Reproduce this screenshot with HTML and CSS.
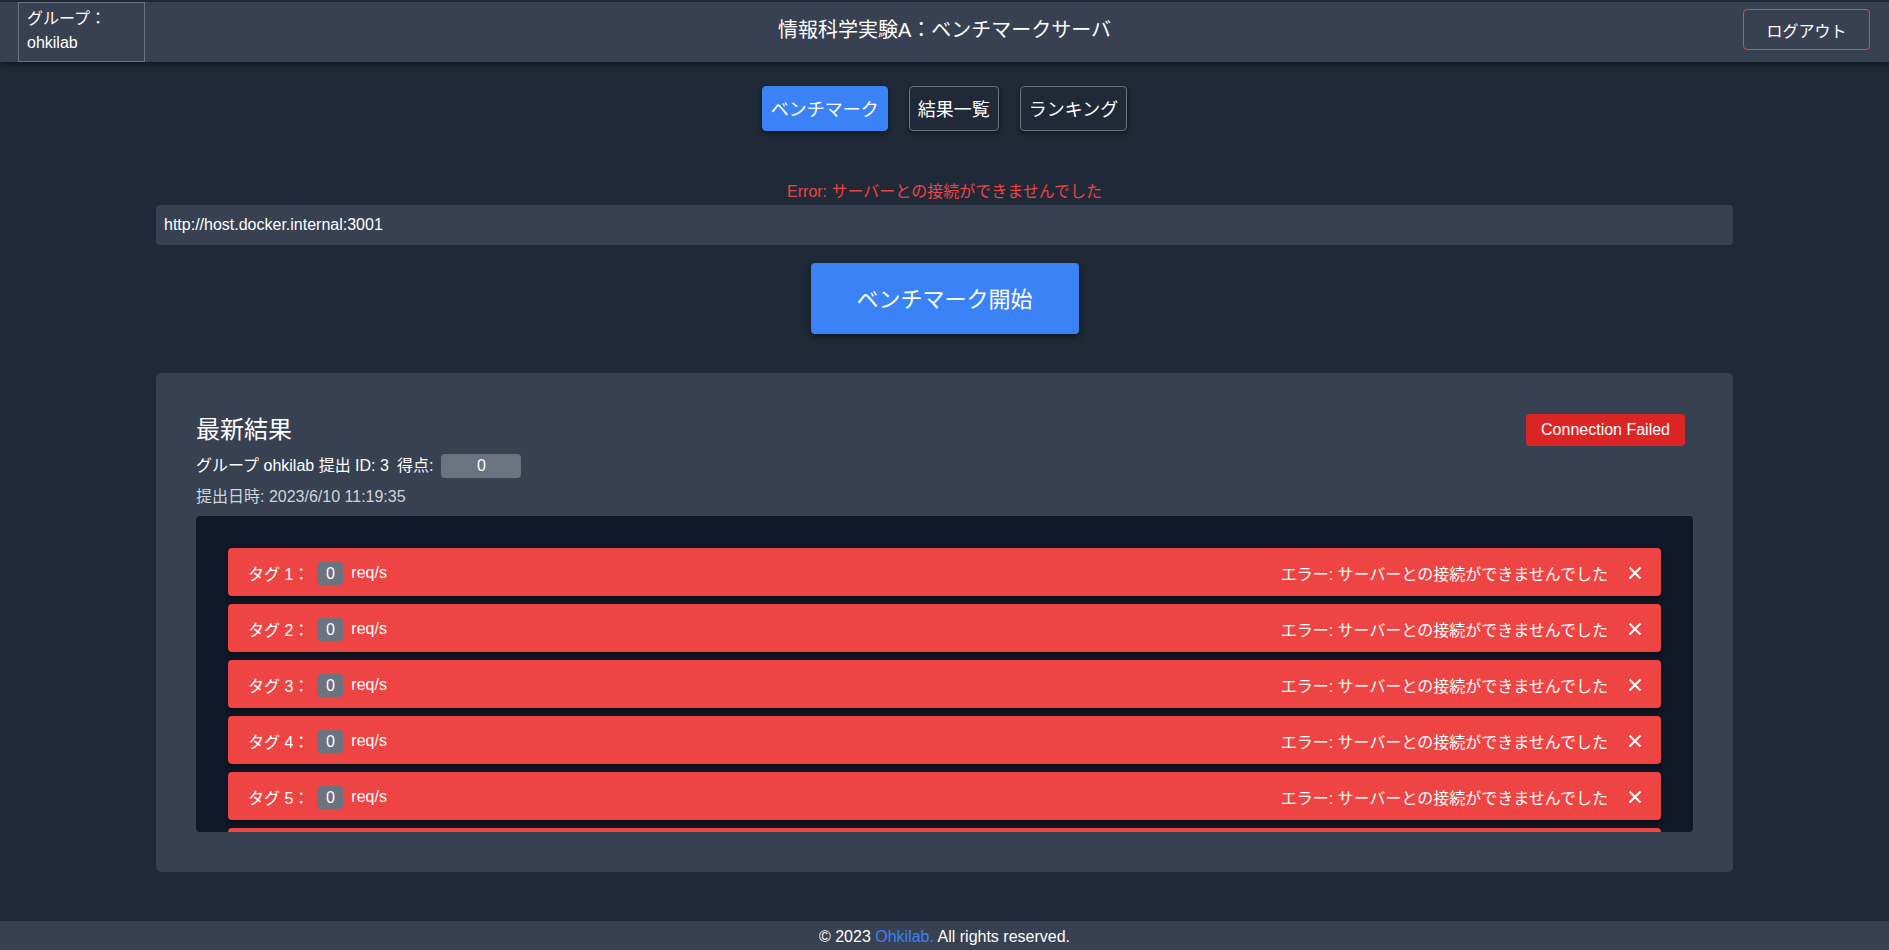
FILE: index.html
```html
<!DOCTYPE html>
<html lang="ja">
<head>
<meta charset="utf-8">
<title>情報科学実験A：ベンチマークサーバ</title>
<link rel="stylesheet" href="styles.css">
</head>
<body>
<div class="page">
  <header class="header">
    <div class="group-box">
      <div>グループ：</div>
      <div>ohkilab</div>
    </div>
    <h1 class="title">情報科学実験A：ベンチマークサーバ</h1>
    <div class="header-right">
      <button class="logout">ログアウト</button>
    </div>
  </header>

  <main class="main">
    <nav class="nav">
      <button class="nav-btn active">ベンチマーク</button>
      <button class="nav-btn">結果一覧</button>
      <button class="nav-btn">ランキング</button>
    </nav>

    <p class="error-text">Error: サーバーとの接続ができませんでした</p>
    <div class="url-input">http://host.docker.internal:3001</div>
    <div class="start-wrap">
      <button class="start-btn">ベンチマーク開始</button>
    </div>

    <section class="card">
      <div class="card-head">
        <div>
          <h2 class="card-title">最新結果</h2>
          <div class="info-line">
            <span>グループ ohkilab 提出 ID: 3</span>
            <span class="score-label">得点:</span>
            <span class="score">0</span>
          </div>
          <div class="date-line">提出日時: 2023/6/10 11:19:35</div>
        </div>
        <span class="status">Connection Failed</span>
      </div>

      <div class="tags">
        <div class="tag-row">
          <div class="tag-left"><span>タグ 1：</span><span class="num">0</span><span>req/s</span></div>
          <div class="tag-right"><span>エラー: サーバーとの接続ができませんでした</span><svg class="x" viewBox="0 0 14 14"><path d="M1.5 1.5 L12.5 12.5 M12.5 1.5 L1.5 12.5"/></svg></div>
        </div>
        <div class="tag-row">
          <div class="tag-left"><span>タグ 2：</span><span class="num">0</span><span>req/s</span></div>
          <div class="tag-right"><span>エラー: サーバーとの接続ができませんでした</span><svg class="x" viewBox="0 0 14 14"><path d="M1.5 1.5 L12.5 12.5 M12.5 1.5 L1.5 12.5"/></svg></div>
        </div>
        <div class="tag-row">
          <div class="tag-left"><span>タグ 3：</span><span class="num">0</span><span>req/s</span></div>
          <div class="tag-right"><span>エラー: サーバーとの接続ができませんでした</span><svg class="x" viewBox="0 0 14 14"><path d="M1.5 1.5 L12.5 12.5 M12.5 1.5 L1.5 12.5"/></svg></div>
        </div>
        <div class="tag-row">
          <div class="tag-left"><span>タグ 4：</span><span class="num">0</span><span>req/s</span></div>
          <div class="tag-right"><span>エラー: サーバーとの接続ができませんでした</span><svg class="x" viewBox="0 0 14 14"><path d="M1.5 1.5 L12.5 12.5 M12.5 1.5 L1.5 12.5"/></svg></div>
        </div>
        <div class="tag-row">
          <div class="tag-left"><span>タグ 5：</span><span class="num">0</span><span>req/s</span></div>
          <div class="tag-right"><span>エラー: サーバーとの接続ができませんでした</span><svg class="x" viewBox="0 0 14 14"><path d="M1.5 1.5 L12.5 12.5 M12.5 1.5 L1.5 12.5"/></svg></div>
        </div>
        <div class="tag-row tag-peek"></div>
      </div>
    </section>
  </main>

  <footer class="footer">© 2023 <span class="link">Ohkilab.</span> All rights reserved.</footer>
</div>
</body>
</html>
```

FILE: styles.css
```css
* { box-sizing: border-box; }

html, body {
  margin: 0;
  padding: 0;
  background: #1f2937;
  height: 950px;
  overflow: hidden;
}

body {
  font-family: "Liberation Sans", "Noto Sans CJK JP", sans-serif;
  color: #ffffff;
  font-size: 16px;
  padding-top: 2px;
}

.page {
  display: flex;
  flex-direction: column;
}

/* header */
.header {
  height: 60px;
  background: #374151;
  display: grid;
  grid-template-columns: 1fr auto 1fr;
  align-items: center;
  box-shadow: 0 3px 6px rgba(0, 0, 0, 0.45);
  position: relative;
  z-index: 1;
}

.group-box {
  justify-self: start;
  margin-left: 18px;
  width: 127px;
  height: 60px;
  border: 1px solid #6b7280;
  padding: 4px 8px;
  font-size: 16px;
  line-height: 24px;
  align-self: start;
}

.title {
  margin: 0 0 5px;
  font-size: 20px;
  font-weight: normal;
  line-height: 28px;
}

.header-right {
  justify-self: end;
  margin: 0 19px 5px 0;
}

.logout {
  display: block;
  font-family: inherit;
  font-size: 16px;
  color: #ffffff;
  background: transparent;
  border: 1px solid #ef4444;
  border-radius: 4px;
  width: 127px;
  height: 41px;
  padding: 0;
}

/* main */
.main {
  width: 1577px;
  margin: 0 auto;
  display: flex;
  flex-direction: column;
  align-items: stretch;
}

.nav {
  margin-top: 24px;
  display: flex;
  justify-content: center;
  gap: 21px;
}

.nav-btn {
  font-family: inherit;
  font-size: 18px;
  color: #ffffff;
  background: #1f2937;
  border: 1px solid #6b7280;
  border-radius: 4px;
  height: 45px;
  padding: 0 8px 2px;
  box-shadow: 0 2px 5px rgba(0, 0, 0, 0.5);
}

.nav-btn.active {
  background: #3b82f6;
  border-color: #3b82f6;
}

.error-text {
  margin: 50px 0 0;
  text-align: center;
  color: #ef4444;
  font-size: 16px;
  line-height: 22px;
}

.url-input {
  margin-top: 2px;
  height: 40px;
  background: #374151;
  border-radius: 4px;
  padding: 0 8px;
  font-size: 16px;
  line-height: 40px;
}

.start-wrap {
  margin-top: 18px;
  display: flex;
  justify-content: center;
}

.start-btn {
  font-family: inherit;
  font-size: 22px;
  color: #ffffff;
  background: #3b82f6;
  border: none;
  border-radius: 4px;
  width: 268px;
  height: 71px;
  padding: 0 0 3px;
  box-shadow: 0 3px 6px rgba(0, 0, 0, 0.5);
}

/* card */
.card {
  margin-top: 39px;
  height: 499px;
  background: #374151;
  border-radius: 5px;
  padding: 41px 40px 40px;
  display: flex;
  flex-direction: column;
}

.card-head {
  display: flex;
  justify-content: space-between;
  align-items: flex-start;
}

.card-title {
  margin: 0;
  font-size: 24px;
  font-weight: normal;
  line-height: 32px;
}

.info-line {
  margin-top: 8px;
  display: flex;
  align-items: center;
  font-size: 16px;
  line-height: 24px;
}

.score-label {
  margin-left: 8px;
}

.score {
  margin-left: 8px;
  width: 80px;
  height: 24px;
  background: #6b7280;
  border-radius: 4px;
  text-align: center;
}

.date-line {
  margin-top: 8px;
  font-size: 16px;
  line-height: 22px;
  color: #d1d5db;
}

.status {
  margin-right: 8px;
  background: #dc2626;
  border-radius: 4px;
  height: 32px;
  line-height: 32px;
  padding: 0 15px;
  font-size: 16px;
}

.tags {
  margin-top: 8px;
  flex: 1;
  background: #111827;
  border-radius: 4px;
  padding: 32px;
  overflow: hidden;
  display: flex;
  flex-direction: column;
  gap: 8px;
}

.tag-row {
  flex: none;
  height: 48px;
  background: #ef4444;
  border-radius: 4px;
  display: flex;
  align-items: center;
  justify-content: space-between;
  padding: 2px 19px 0 20px;
  box-shadow: 0 3px 5px rgba(0, 0, 0, 0.5);
  font-size: 16px;
}

.tag-left {
  display: flex;
  align-items: center;
  gap: 8px;
}

.num {
  background: #6b7280;
  border-radius: 4px;
  min-width: 26px;
  height: 23px;
  line-height: 23px;
  text-align: center;
  padding: 0 7px;
}

.tag-right {
  display: flex;
  align-items: center;
  gap: 20px;
}

.x {
  width: 14px;
  height: 14px;
  stroke: #ffffff;
  stroke-width: 2;
  fill: none;
}

/* footer */
.footer {
  margin-top: 49px;
  height: 40px;
  background: #374151;
  text-align: center;
  font-size: 16px;
  line-height: 32px;
}

.link {
  color: #3b82f6;
}
```
